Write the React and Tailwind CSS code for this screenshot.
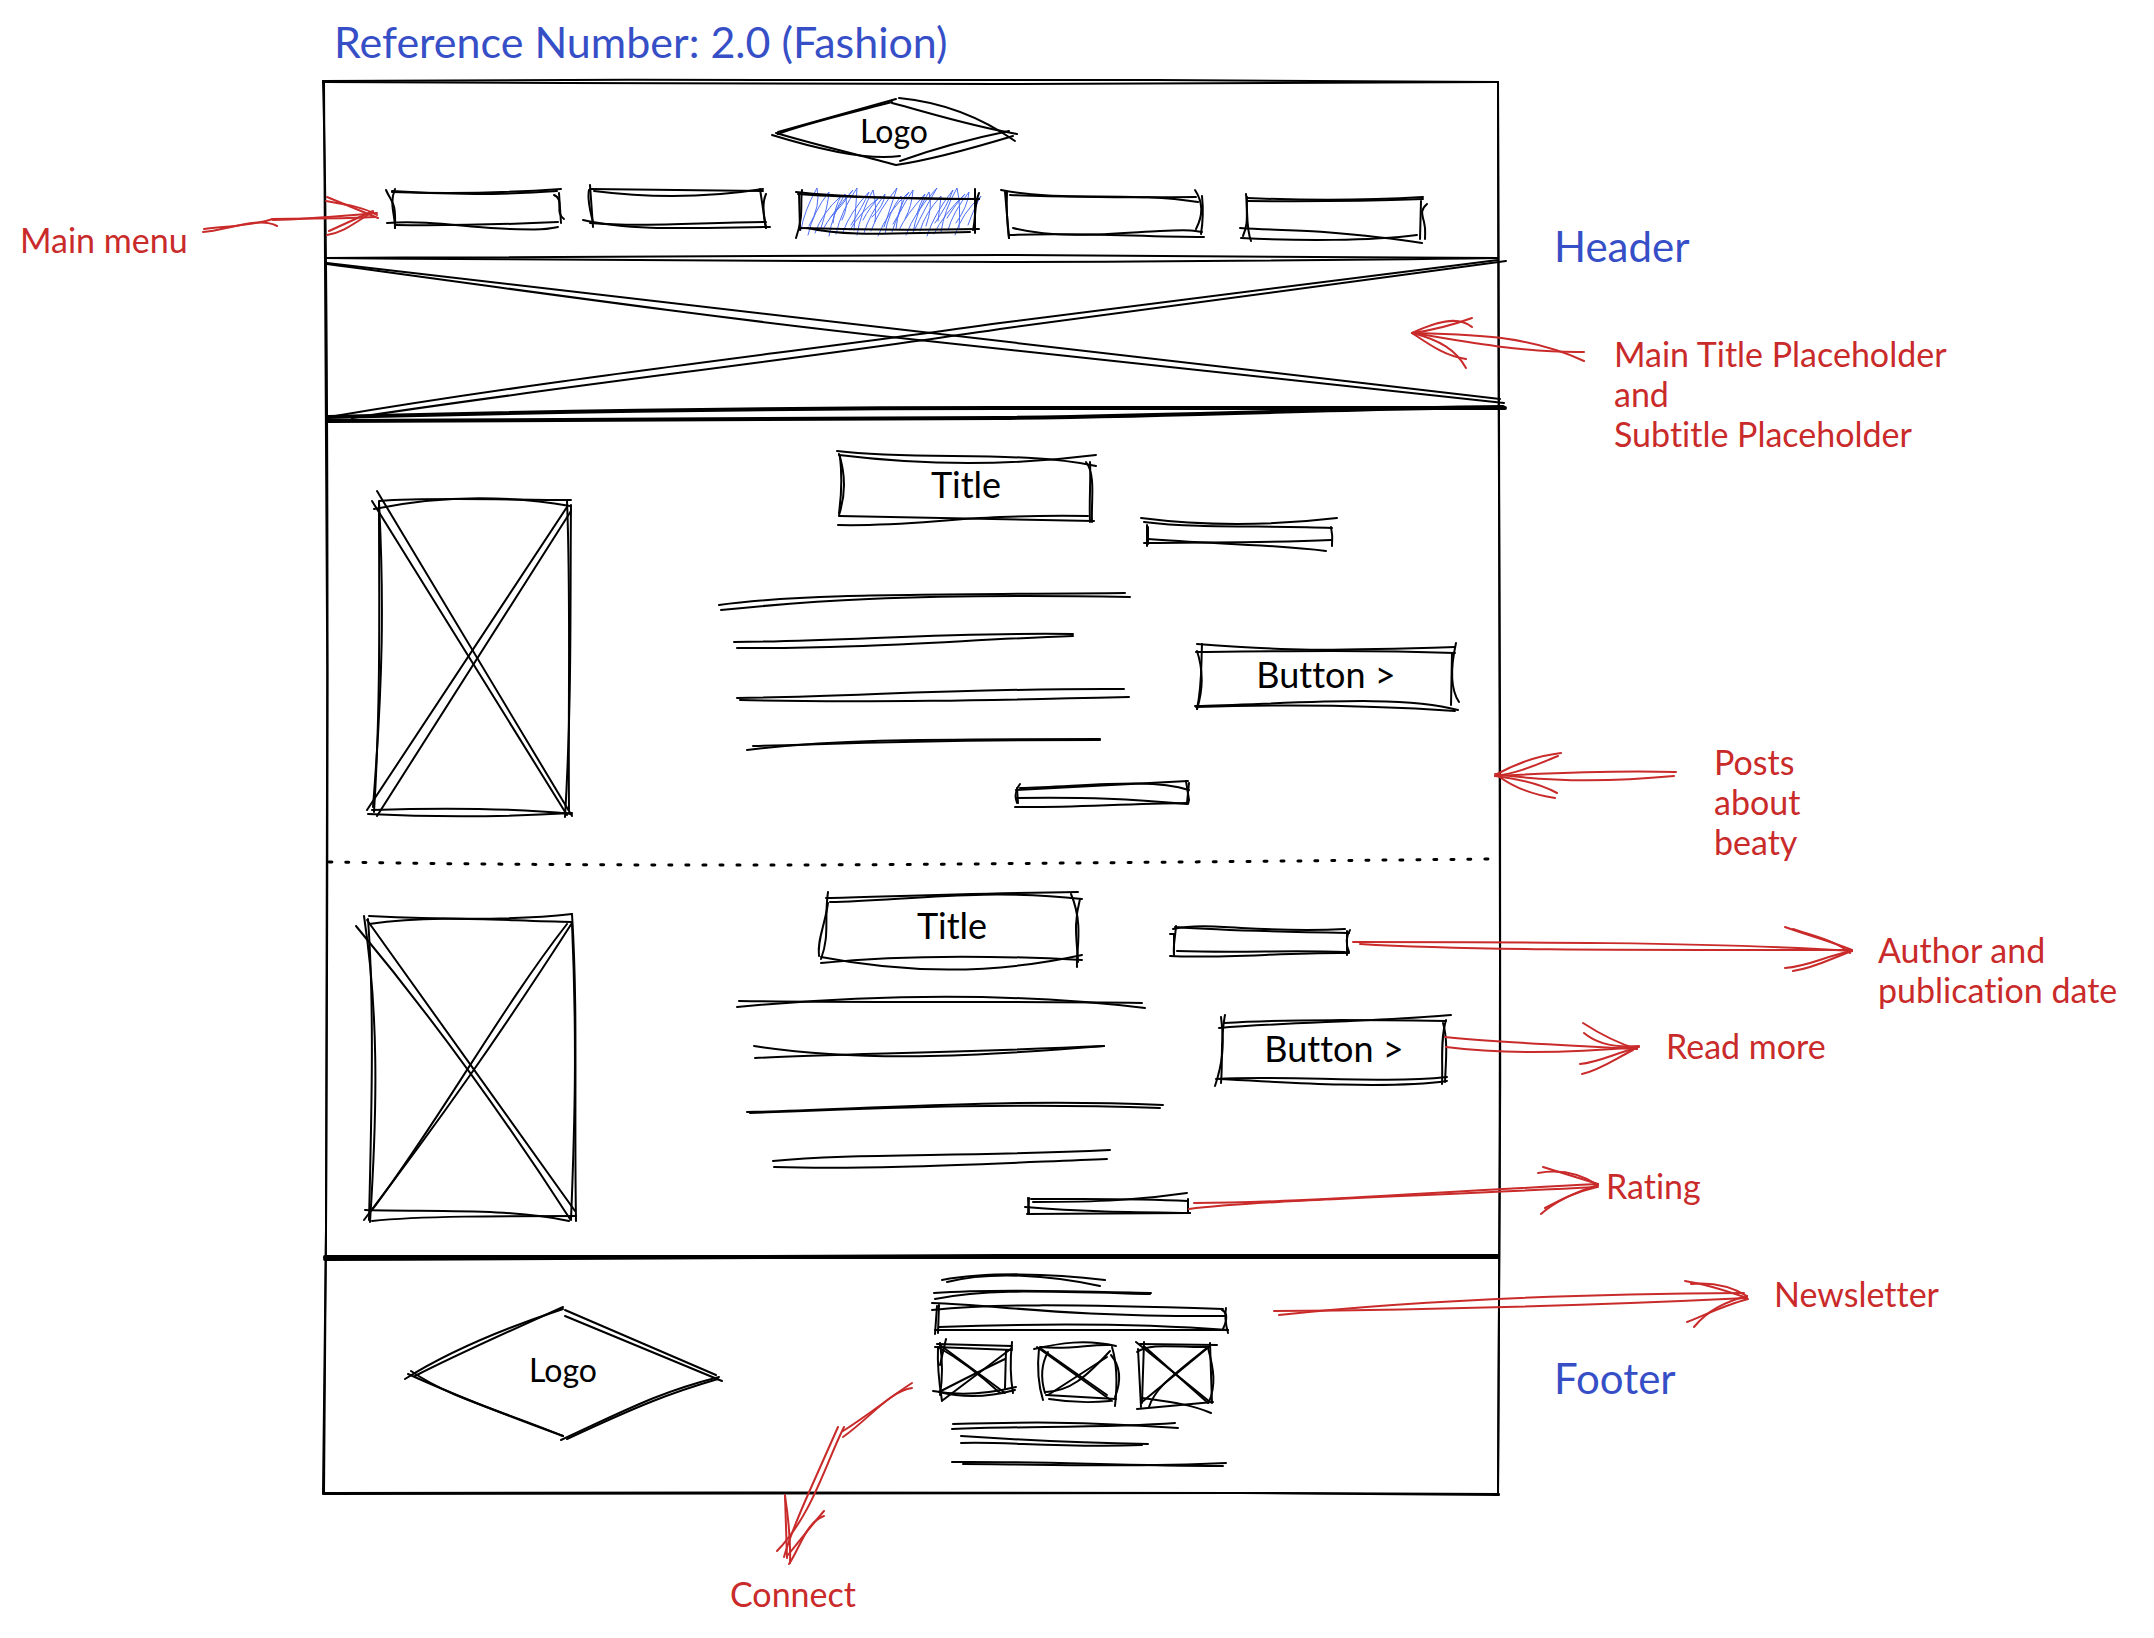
const frame = [
  "M323 81 C329 300 328 800 326 1230 L324 1494",
  "M324 81 C328 400 328 900 326 1230 L323 1493",
  "M323 81 C600 79 1000 80 1157 80 S1420 82 1498 82",
  "M323 82 C550 83 760 84 1000 84 S1400 83 1498 82",
  "M1498 82 C1498 300 1499 500 1500 720 S1500 1300 1498 1495",
  "M1498 82 C1499 360 1500 800 1500 960 S1499 1400 1498 1495",
  "M323 1494 C600 1493 900 1492 1240 1493 L1499 1495",
  "M323 1493 C600 1492 1000 1493 1240 1493 L1499 1494",
];

const headerRules = [
  "M325 258 C560 257 800 254 1000 255 S1350 257 1498 258",
  "M325 258 C560 260 800 262 1000 262 S1350 260 1498 258",
  "M327 263 L1500 399",
  "M327 264 C520 290 700 316 900 338 S1340 384 1504 403",
  "M329 417 C560 378 780 354 1000 323 L1498 260",
  "M352 418 C560 386 780 362 1000 329 L1506 261",
];

const heavyRules = [
  "M328 417 C560 411 780 408 1000 408 L1505 408",
  "M327 421 C560 421 780 421 1000 418 S1350 408 1503 407",
  "M325 1257 C600 1257 900 1257 1498 1257",
  "M325 1259 C560 1258 800 1257 1000 1256 L1498 1256",
];

const headerLogo = [
  "M778 132 L896 99",
  "M778 134 C800 125 850 113 892 102",
  "M899 98 Q962 104 1015 141",
  "M892 103 C930 113 970 126 1017 134",
  "M1009 131 Q950 143 900 161",
  "M1013 136 C980 146 930 160 896 165",
  "M896 165 C860 155 820 146 776 133",
  "M900 156 Q860 162 772 135",
];

const menuBoxes = [
  // 1
  "M392 192 Q474 195 561 189", "M392 191 Q476 197 557 191",
  "M386 190 C392 204 396 200 395 228", "M395 189 C389 204 395 214 395 228",
  "M554 195 C565 200 554 212 564 219", "M559 193 L561 223",
  "M387 223 C430 220 470 228 510 229 S545 229 558 227", "M396 225 Q470 226 558 222",
  // 2
  "M590 189 L763 191", "M594 191 Q680 202 763 189",
  "M590 185 L593 227", "M589 190 Q587 200 593 222",
  "M760 189 L766 228", "M766 194 Q761 205 766 228",
  "M583 220 C630 231 690 228 770 227", "M590 223 C640 227 690 223 766 222",
  // 3
  "M796 192 Q860 199 979 199", "M798 194 Q850 198 979 199",
  "M799 193 L800 230", "M802 190 C800 205 804 215 796 238",
  "M975 189 L975 233", "M979 193 C974 205 976 218 973 230",
  "M800 228 Q890 231 979 229", "M807 228 C850 237 890 233 970 232",
  // 4
  "M1001 190 C1060 202 1130 191 1198 202", "M1010 195 Q1100 198 1196 197",
  "M1005 192 L1009 238", "M1007 192 Q1006 215 1009 238",
  "M1195 190 Q1207 208 1196 229", "M1202 196 Q1204 215 1201 234",
  "M1013 228 C1060 240 1120 233 1160 231 S1190 231 1202 232", "M1010 235 C1080 232 1140 237 1204 237",
  // 5
  "M1247 198 Q1340 202 1423 197", "M1248 201 Q1340 202 1423 199",
  "M1246 194 C1248 215 1246 228 1251 241", "M1247 197 C1246 215 1249 222 1243 236",
  "M1427 204 C1420 210 1422 214 1424 222 S1425 232 1425 239", "M1421 201 L1420 239",
  "M1240 228 C1270 230 1300 230 1324 232 S1390 238 1422 243", "M1241 238 C1300 241 1370 241 1417 235",
];

const posts = [
  // first post picture
  "M379 501 C430 497 510 500 571 500", "M374 509 Q470 489 570 506",
  "M379 502 C384 600 383 680 373 807", "M379 503 C379 600 381 700 374 812",
  "M567 501 C571 600 568 700 569 810", "M571 505 C570 600 572 700 565 817",
  "M372 810 C430 808 510 808 572 814", "M368 814 Q470 819 572 813",
  "M377 491 L572 816", "M372 501 L567 815", "M567 507 L367 810", "M571 511 L377 816",
  // first post title
  "M837 451 C920 461 1020 450 1096 466", "M839 455 Q970 471 1096 455",
  "M839 454 Q849 485 839 515", "M840 456 Q843 485 839 513",
  "M1086 462 C1096 475 1091 500 1092 522", "M1090 462 C1091 480 1089 500 1090 522",
  "M839 516 L1094 521", "M838 525 C920 527 960 514 1088 516",
  // first post byline
  "M1141 518 Q1235 530 1337 518", "M1144 522 C1200 529 1270 525 1332 528",
  "M1147 525 L1147 546", "M1148 527 L1148 544", "M1331 527 Q1333 536 1332 546",
  "M1144 543 C1220 542 1270 543 1331 540", "M1148 539 C1210 544 1270 544 1326 551",
  // first post text
  "M719 605 C800 594 900 595 1125 593", "M721 610 C800 602 900 593 1130 597",
  "M734 642 C850 641 950 632 1073 634", "M737 648 C860 649 960 640 1073 636",
  "M737 698 C850 697 960 688 1124 689", "M740 700 C860 703 1000 700 1129 697",
  "M747 750 C830 740 900 739 1100 739", "M753 746 C840 744 900 740 1100 740",
  // first post button
  "M1197 644 C1290 651 1320 651 1455 647", "M1196 652 C1290 651 1370 650 1455 653",
  "M1202 644 C1201 670 1202 685 1197 709", "M1197 651 C1204 672 1203 690 1197 709",
  "M1456 643 C1450 670 1451 690 1459 702", "M1452 653 L1451 705",
  "M1195 706 C1290 704 1400 694 1458 710", "M1196 707 C1290 704 1370 705 1455 711",
  // first post rating
  "M1016 790 L1188 781", "M1020 788 C1090 786 1150 778 1189 790",
  "M1020 784 Q1013 793 1017 803", "M1017 788 L1018 803", "M1186 781 L1189 800 L1188 804", "M1189 783 L1187 803",
  "M1016 798 C1090 797 1130 799 1187 804", "M1015 807 C1060 808 1120 804 1187 803",
  // second post picture
  "M369 916 C430 919 510 921 572 914", "M369 924 C440 914 500 921 572 922",
  "M364 916 C378 1010 378 1100 370 1222", "M368 919 C374 1000 372 1100 369 1220",
  "M572 914 C578 1010 574 1100 576 1221", "M572 923 C577 1040 575 1120 571 1220",
  "M365 1210 C430 1212 510 1208 569 1221", "M372 1221 C420 1216 500 1216 576 1216",
  "M367 920 L575 1211", "M356 926 Q466 1058 570 1219", "M567 924 C500 1010 440 1120 372 1210", "M572 923 C500 1035 440 1120 364 1220",
  // second post title
  "M826 898 C900 896 980 893 1078 892", "M830 902 C900 901 980 888 1082 899",
  "M828 892 C824 920 830 935 821 959", "M828 903 C825 925 817 940 819 956",
  "M1071 894 C1084 925 1076 950 1077 967", "M1080 899 C1073 925 1077 940 1078 962",
  "M821 957 Q955 983 1082 955", "M821 963 Q930 952 1082 960",
  // second post byline
  "M1173 929 C1210 921 1260 934 1345 929", "M1175 927 C1230 931 1290 932 1349 933",
  "M1176 926 C1175 940 1173 945 1174 955", "M1170 934 L1174 934 L1174 953",
  "M1350 930 C1345 938 1346 945 1349 952", "M1347 931 L1347 955",
  "M1177 951 C1240 953 1290 950 1345 952", "M1170 956 C1220 959 1290 952 1349 953",
  // second post text
  "M739 1001 C860 1003 1000 1001 1142 1003", "M737 1007 Q960 986 1145 1008",
  "M754 1046 C860 1062 970 1057 1104 1046", "M755 1058 C830 1054 950 1053 1104 1046",
  "M747 1112 C850 1110 1000 1098 1163 1105", "M750 1113 C860 1109 1000 1102 1160 1108",
  "M773 1161 C850 1153 960 1157 1110 1150", "M774 1167 C870 1170 980 1164 1107 1159",
  // second post button
  "M1224 1023 C1290 1019 1370 1020 1446 1021", "M1219 1028 C1290 1022 1370 1022 1451 1015",
  "M1225 1015 C1220 1040 1223 1060 1221 1083", "M1221 1017 C1225 1045 1222 1065 1215 1086",
  "M1443 1023 C1448 1040 1446 1060 1445 1082", "M1446 1020 C1440 1040 1443 1065 1442 1084",
  "M1216 1079 C1290 1075 1380 1084 1447 1077", "M1220 1079 C1290 1083 1390 1089 1447 1081",
  // second post rating
  "M1031 1199 C1090 1199 1130 1198 1188 1201", "M1033 1202 C1100 1202 1140 1200 1187 1193",
  "M1029 1198 L1028 1214", "M1028 1198 L1029 1213", "M1188 1199 L1188 1213",
  "M1025 1207 C1090 1212 1120 1212 1190 1213", "M1027 1214 L1190 1213",
];

const footer = [
  // logo
  "M405 1379 C440 1357 490 1333 563 1309", "M415 1376 C460 1353 510 1331 563 1307",
  "M565 1310 L716 1375", "M565 1316 L722 1381",
  "M719 1377 C660 1392 630 1408 561 1440", "M718 1379 C670 1393 640 1405 567 1439",
  "M411 1371 C450 1398 500 1410 563 1436", "M408 1374 C450 1393 500 1413 563 1436",
  // newsletter text
  "M942 1280 C985 1272 1050 1273 1105 1280", "M947 1282 C990 1271 1050 1275 1100 1286",
  "M934 1293 C990 1289 1060 1291 1151 1293", "M935 1299 C985 1289 1030 1291 1150 1294",
  // newsletter box
  "M932 1303 C1000 1305 1060 1317 1226 1316", "M932 1310 C990 1304 1060 1304 1223 1309",
  "M939 1305 L938 1333", "M937 1306 L935 1334",
  "M1226 1308 Q1224 1318 1228 1333", "M1222 1310 Q1230 1314 1223 1329",
  "M939 1327 C1020 1324 1120 1322 1228 1330", "M935 1330 L1228 1330",
  // first social icon
  "M937 1344 L1012 1346", "M935 1347 L1012 1350",
  "M938 1347 Q937 1370 942 1401", "M940 1343 Q944 1370 940 1395", "M946 1339 L940 1365",
  "M1012 1342 Q1009 1370 1013 1393", "M1006 1350 L1005 1388",
  "M933 1391 Q970 1398 1016 1387", "M939 1392 Q975 1401 1015 1390",
  "M940 1345 L1005 1393", "M938 1347 Q968 1364 1000 1393", "M1012 1348 L943 1400", "M1005 1359 Q980 1371 939 1392",
  // second social icon
  "M1034 1349 C1060 1343 1085 1339 1116 1346", "M1040 1347 C1070 1350 1090 1344 1110 1345",
  "M1039 1348 Q1036 1378 1043 1400", "M1048 1352 Q1038 1370 1045 1393",
  "M1112 1347 Q1119 1370 1115 1406", "M1111 1355 Q1125 1372 1115 1397",
  "M1046 1395 L1116 1399", "M1049 1399 Q1080 1404 1110 1401",
  "M1037 1347 L1112 1401", "M1040 1348 L1107 1395", "M1110 1351 C1085 1378 1070 1391 1046 1392", "M1107 1357 L1048 1395",
  // third social icon
  "M1140 1344 L1217 1345", "M1137 1352 C1150 1342 1180 1348 1210 1347",
  "M1138 1349 L1141 1407", "M1144 1342 L1142 1403",
  "M1210 1343 L1212 1403", "M1208 1348 C1214 1370 1216 1385 1209 1402",
  "M1142 1398 C1170 1402 1190 1404 1211 1413", "M1137 1409 L1213 1402",
  "M1136 1342 L1210 1402", "M1145 1347 L1208 1403", "M1210 1346 L1142 1402", "M1208 1347 C1170 1378 1155 1388 1149 1407",
  // copyright
  "M953 1424 C1020 1422 1080 1421 1178 1428", "M952 1429 C1020 1426 1110 1428 1175 1423",
  "M961 1436 C1020 1440 1080 1443 1148 1444", "M961 1443 C1000 1441 1060 1448 1142 1445",
  "M952 1462 C1040 1461 1120 1466 1223 1466", "M963 1464 C1040 1464 1120 1468 1226 1463",
];

const arrows = [
  // main menu
  "M204 229 C230 226 255 225 273 219", "M203 232 C225 231 258 216 277 226",
  "M272 219 C310 218 340 219 375 217", "M273 220 C310 219 340 216 377 213",
  "M327 197 L378 218", "M326 201 C350 205 365 208 377 215",
  "M329 231 L373 211", "M327 235 C345 232 355 222 373 212",
  // title placeholder
  "M1412 333 C1480 335 1530 336 1584 361", "M1412 333 C1460 340 1520 353 1584 352",
  "M1412 333 C1435 330 1450 326 1472 318", "M1412 333 C1435 322 1458 315 1472 327",
  "M1412 333 C1430 345 1445 356 1466 359", "M1412 333 C1440 340 1456 350 1466 368",
  // posts
  "M1495 776 C1550 773 1610 770 1676 772", "M1495 774 C1550 782 1610 782 1674 776",
  "M1497 774 Q1528 757 1561 753", "M1495 776 C1520 773 1540 763 1558 756",
  "M1495 776 Q1535 781 1557 793", "M1497 775 C1515 789 1535 795 1555 798",
  // author
  "M1353 942 C1500 942 1720 942 1852 951", "M1360 944 C1460 950 1600 950 1852 950",
  "M1785 927 C1810 936 1830 941 1852 950", "M1793 929 C1810 935 1835 940 1850 953",
  "M1785 968 C1810 966 1825 956 1852 951", "M1793 971 C1815 968 1832 958 1852 951",
  // read more
  "M1445 1037 C1500 1043 1570 1045 1637 1049", "M1446 1047 C1500 1054 1570 1053 1639 1047",
  "M1583 1023 C1600 1034 1617 1043 1637 1049", "M1584 1033 Q1603 1049 1639 1046",
  "M1580 1064 C1600 1062 1615 1053 1637 1048", "M1582 1074 C1600 1070 1615 1059 1633 1050",
  // rating
  "M1194 1203 C1290 1203 1400 1194 1598 1184", "M1189 1209 C1250 1201 1400 1197 1598 1187",
  "M1543 1167 L1598 1184", "M1538 1173 Q1570 1167 1598 1185",
  "M1541 1214 Q1560 1197 1598 1185", "M1545 1208 C1560 1200 1575 1192 1597 1187",
  // newsletter
  "M1274 1311 C1400 1310 1560 1307 1747 1298", "M1279 1315 C1400 1302 1560 1294 1744 1293",
  "M1685 1281 C1710 1285 1730 1292 1747 1298", "M1691 1284 Q1722 1281 1747 1296",
  "M1687 1322 C1705 1315 1725 1305 1748 1299", "M1694 1327 C1708 1310 1725 1302 1747 1296",
  // connect
  "M912 1383 C890 1397 870 1414 843 1431", "M912 1388 C890 1391 870 1418 843 1437",
  "M838 1427 L810 1490 Q790 1535 784 1557", "M844 1427 C825 1465 812 1515 777 1551",
  "M785 1495 Q786 1530 787 1558", "M785 1496 Q791 1535 790 1563",
  "M824 1511 C812 1525 800 1540 788 1555", "M824 1516 C806 1522 800 1548 789 1564",
];

const scribble = Array.from({ length: 23 }, (_, i) => {
  const x = 801 + i * 7;
  const top = 188 + ((i * 7) % 5) * 2;
  const bottom = 230 + ((i * 5) % 7);
  return `M${x} ${bottom} Q${x + 3 + (i % 4) * 2} ${211 + (i % 5)} ${x + 16 + (i % 4) * 5} ${top} Q${x + 20} 206 ${x + 8 + (i % 3) * 5} ${bottom - 4 - (i % 5) * 3}`;
});

function Strokes({ paths, className, width = 2, dash }) {
  return (
    <g className={className} strokeWidth={width} strokeDasharray={dash}>
      {paths.map((d) => (
        <path key={d} d={d} />
      ))}
    </g>
  );
}

function Sketch() {
  return (
    <svg
      aria-hidden="true"
      className="pointer-events-none absolute inset-0 size-full overflow-visible"
      fill="none"
      strokeLinecap="round"
      strokeLinejoin="round"
    >
      <Strokes paths={scribble} className="stroke-[#4c6ef5]" width={1} />
      <Strokes paths={frame} className="stroke-black" />
      <Strokes paths={headerRules} className="stroke-black" />
      <Strokes paths={heavyRules} className="stroke-black" width={4} />
      <Strokes paths={headerLogo} className="stroke-black" />
      <Strokes paths={menuBoxes} className="stroke-black" />
      <Strokes paths={posts} className="stroke-black" />
      <Strokes
        paths={["M329 862 C500 865 750 866 965 864 S1300 861 1490 859"]}
        className="stroke-black"
        width={3}
        dash="3 14"
      />
      <Strokes paths={footer} className="stroke-black" />
      <Strokes paths={arrows} className="stroke-[#c92a2a]" />
    </svg>
  );
}

function Note({ className = "", children }) {
  return <p className={`whitespace-pre text-[34px] leading-10 text-[#c92a2a] ${className}`}>{children}</p>;
}

function Label({ children }) {
  return <h2 className="text-[42px] leading-12 text-[#364fc7]">{children}</h2>;
}

function Logo({ className }) {
  return <p className={`text-center text-[32px] leading-10 ${className}`}>Logo</p>;
}

function Post({ className, bodyClass, buttonClass }) {
  return (
    <article className={`flex items-start pl-12 text-[36px] leading-11 ${className}`}>
      <div role="img" aria-label="Post picture" className="h-78 w-50 self-center" />
      <div className={`flex w-64 flex-col ${bodyClass}`}>
        <h3 className="py-3 text-center">Title</h3>
      </div>
      <button type="button" className={`ml-auto h-14 ${buttonClass}`}>
        Button &gt;
      </button>
    </article>
  );
}

const menu = ["Item 1", "Item 2", "Fashion", "Item 4", "Item 5"];
const socials = ["Social 1", "Social 2", "Social 3"];

export default function App() {
  return (
    <main className="relative min-h-screen w-full min-w-[2140px] bg-white font-['Virgil','Lato',sans-serif] text-black [font-variant-ligatures:none]">
      <Sketch />

      <h1 className="h-20 pl-[334px] pt-[18px] text-[43px] leading-12 text-[#364fc7]">
        Reference Number: 2.0 (Fashion)
      </h1>

      <div className="grid grid-cols-[324px_1174px_1fr]">
        <aside className="pl-5 pt-[140px]">
          <Note>Main menu</Note>
        </aside>

        <div className="flex flex-col">
          <header className="flex h-[178px] flex-col gap-10 pt-[31px]">
            <Logo className="ml-[452px] w-59" />
            <nav aria-label="Main menu" className="mx-16 flex h-11 justify-between">
              {menu.map((item) => (
                <a key={item} href="#menu" aria-label={item} className="w-43" />
              ))}
            </nav>
          </header>

          <section aria-label="Main title and subtitle" className="h-40" />

          <Post className="h-[445px] pt-8" bodyClass="ml-[266px]" buttonClass="mr-11 mt-[196px] w-64" />
          <Post className="h-[395px] pt-7" bodyClass="ml-[252px]" buttonClass="mr-13 mt-[129px] w-56" />

          <footer className="flex h-[236px] items-start pl-[88px]">
            <Logo className="mt-23 w-[302px]" />
            <div className="ml-56 mt-[54px] flex flex-col gap-4">
              <input type="email" aria-label="Newsletter" className="h-4 w-71 bg-transparent outline-none" />
              <div className="flex gap-7">
                {socials.map((item) => (
                  <a key={item} href="#connect" aria-label={item} className="h-14 w-18" />
                ))}
              </div>
            </div>
          </footer>
        </div>

        <aside className="flex flex-col pl-14 pt-[142px]">
          <div className="flex flex-col gap-16">
            <Label>Header</Label>
            <Note className="pl-15">{"Main Title Placeholder\nand\nSubtitle Placeholder"}</Note>
          </div>

          <div className="flex flex-col pt-72">
            <Note className="pl-40">{"Posts\nabout\nbeaty"}</Note>
            <Note className="pl-81 pt-17">{"Author and\npublication date"}</Note>
            <Note className="pl-28 pt-4">Read more</Note>
            <Note className="pl-13 pt-25">Rating</Note>
          </div>

          <div className="flex flex-col gap-10 pt-17">
            <Note className="pl-55">Newsletter</Note>
            <Label>Footer</Label>
          </div>
        </aside>
      </div>

      <Note className="pl-[730px] pt-20">Connect</Note>
    </main>
  );
}
